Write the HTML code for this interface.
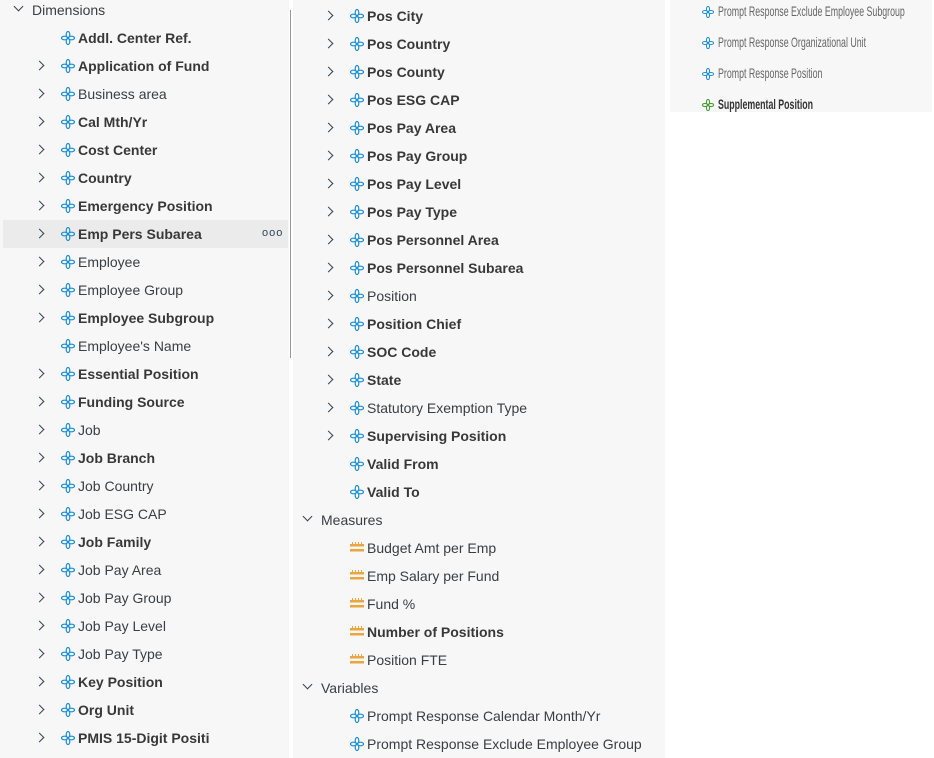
<!DOCTYPE html>
<html><head><style>
body{margin:0;width:934px;height:758px;background:#fff;position:relative;overflow:hidden;font-family:"Liberation Sans",sans-serif;font-size:14px;color:#3a3e42}
.p{position:absolute;background:#f7f7f7}
.r{position:absolute;height:28px;line-height:28px;white-space:nowrap}
.b{font-weight:bold;color:#383838}
.ch{position:absolute;top:10px;width:6px;height:6px;border-right:1.5px solid #345;border-top:1.5px solid #345;transform:rotate(45deg)}
.dn{position:absolute;top:7px;width:6px;height:6px;border-right:1.5px solid #345;border-bottom:1.5px solid #345;transform:rotate(45deg)}
.ic{position:absolute;top:7px}
.t{position:absolute;top:0}
.rr{position:absolute;left:705px;font-size:14px;color:#666;white-space:nowrap;transform:scaleX(.63);transform-origin:0 50%}
</style></head><body>
<svg width="0" height="0" style="position:absolute"><defs>
<g id="f" fill="none" stroke="#1a8fd6" stroke-width="1.2"><ellipse cx="7" cy="3.5" rx="1.8" ry="3"/><ellipse cx="7" cy="10.5" rx="1.8" ry="3"/><ellipse cx="3.5" cy="7" rx="3" ry="1.8"/><ellipse cx="10.5" cy="7" rx="3" ry="1.8"/></g>
<g id="m"><rect x="0" y="3" width="14" height="2.5" fill="#eba640"/><rect x="0" y="8" width="14" height="2.5" fill="#eba640"/><rect x="2" y="1" width="1" height="2" fill="#eba640"/><rect x="5" y="1" width="1" height="2" fill="#eba640"/><rect x="8" y="1" width="1" height="2" fill="#eba640"/><rect x="11" y="1" width="1" height="2" fill="#eba640"/></g>
</defs></svg>
<div class="p" style="left:0;top:0;width:289px;height:758px"></div>
<div style="position:absolute;left:290px;top:10px;width:1px;height:348px;background:#999"></div>
<div class="p" style="left:293px;top:0;width:372px;height:758px"></div>
<div class="p" style="left:670px;top:0;width:262px;height:112px"></div>
<div style="position:absolute;left:3px;top:220px;width:285px;height:28px;background:#ebebeb"></div>
<div style="position:absolute;left:262px;top:227px;font-size:11px;color:#345;letter-spacing:1px">ooo</div>
<div id="L"></div>
<script>
function row(x,y,txt,bold,chev,icon){
 let h='<div class="r" style="left:0;top:'+(y-14)+'px;width:100%">';
 if(chev===1)h+='<div class="ch" style="left:'+(x-42)+'px"></div>';
 if(chev===2)h+='<div class="dn" style="left:'+(x-17)+'px"></div>';
 if(icon)h+='<svg class="ic" style="left:'+(x-17)+'px" width="14" height="14"><use href="#'+icon+'"/></svg>';
 h+='<span class="t'+(bold?' b':'')+'" style="left:'+x+'px">'+txt+'</span></div>';
 return h;}
let s='';
s+=row(32,10,'Dimensions',0,2,null);
const L=[['Addl. Center Ref.',1,0],['Application of Fund',1,1],['Business area',0,1],['Cal Mth/Yr',1,1],['Cost Center',1,1],['Country',1,1],['Emergency Position',1,1],['Emp Pers Subarea',1,1],['Employee',0,1],['Employee Group',0,1],['Employee Subgroup',1,1],["Employee's Name",0,0],['Essential Position',1,1],['Funding Source',1,1],['Job',0,1],['Job Branch',1,1],['Job Country',0,1],['Job ESG CAP',0,1],['Job Family',1,1],['Job Pay Area',0,1],['Job Pay Group',0,1],['Job Pay Level',0,1],['Job Pay Type',0,1],['Key Position',1,1],['Org Unit',1,1],['PMIS 15-Digit Positi',1,1]];
L.forEach((e,i)=>s+=row(78,38+28*i,e[0],e[1],e[2]?1:0,'f'));
const M=[['Pos City',1,1],['Pos Country',1,1],['Pos County',1,1],['Pos ESG CAP',1,1],['Pos Pay Area',1,1],['Pos Pay Group',1,1],['Pos Pay Level',1,1],['Pos Pay Type',1,1],['Pos Personnel Area',1,1],['Pos Personnel Subarea',1,1],['Position',0,1],['Position Chief',1,1],['SOC Code',1,1],['State',1,1],['Statutory Exemption Type',0,1],['Supervising Position',1,1],['Valid From',1,0],['Valid To',1,0]];
M.forEach((e,i)=>s+=row(367,16+28*i,e[0],e[1],e[2]?1:0,'f'));
s+=row(321,520,'Measures',0,2,null);
[['Budget Amt per Emp',0],['Emp Salary per Fund',0],['Fund %',0],['Number of Positions',1],['Position FTE',0]].forEach((e,i)=>s+=row(367,548+28*i,e[0],e[1],0,'m'));
s+=row(321,688,'Variables',0,2,null);
s+=row(367,716,'Prompt Response Calendar Month/Yr',0,0,'f');
s+=row(367,744,'Prompt Response Exclude Employee Group',0,0,'f');
document.getElementById('L').innerHTML=s;
</script>
<svg style="position:absolute;left:702px;top:6px" width="12" height="12" viewBox="0 0 14 14"><use href="#f"/></svg>
<div class="rr" style="left:718px;top:3px">Prompt Response Exclude Employee Subgroup</div>
<svg style="position:absolute;left:702px;top:37px" width="12" height="12" viewBox="0 0 14 14"><use href="#f"/></svg>
<div class="rr" style="left:718px;top:34px">Prompt Response Organizational Unit</div>
<svg style="position:absolute;left:702px;top:68px" width="12" height="12" viewBox="0 0 14 14"><use href="#f"/></svg>
<div class="rr" style="left:718px;top:65px">Prompt Response Position</div>
<svg style="position:absolute;left:702px;top:99px" width="12" height="12" viewBox="0 0 14 14"><g fill="none" stroke="#4a9a3a" stroke-width="1.3"><ellipse cx="7" cy="3.5" rx="1.8" ry="3"/><ellipse cx="7" cy="10.5" rx="1.8" ry="3"/><ellipse cx="3.5" cy="7" rx="3" ry="1.8"/><ellipse cx="10.5" cy="7" rx="3" ry="1.8"/></g></svg>
<div class="rr" style="left:718px;top:96px;font-weight:bold;color:#333">Supplemental Position</div>
</body></html>
